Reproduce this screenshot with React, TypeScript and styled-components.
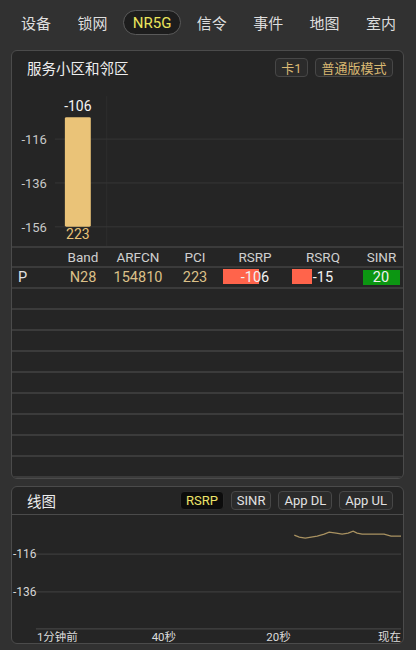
import React from 'react';
import styled, { createGlobalStyle } from 'styled-components';

const GlobalStyle = createGlobalStyle`
  html, body {
    margin: 0;
    padding: 0;
    background: #313131;
    font-family: Roboto, "Noto Sans CJK SC", "Liberation Sans", sans-serif;
    color: #e6e6e6;
  }
`;

const tabs = ['设备', '锁网', 'NR5G', '信令', '事件', '地图', '室内'];

interface CellRow {
  tag: string;
  band: string;
  arfcn: string;
  pci: string;
  rsrp: number;
  rsrq: number;
  sinr: number;
}

const rows: CellRow[] = [
  { tag: 'P', band: 'N28', arfcn: '154810', pci: '223', rsrp: -106, rsrq: -15, sinr: 20 },
];

const trace: [number, number][] = [
  [283, 20], [288, 22], [294, 23], [300, 22], [306, 21], [313, 19], [318, 17], [325, 18],
  [331, 19], [337, 18], [342, 16], [346, 18], [351, 19], [360, 19], [373, 19], [380, 21], [390, 21],
];

const Page = styled.div`
  width: 416px;
  height: 650px;
  overflow: hidden;
`;

const TabBar = styled.nav`
  height: 45px;
  display: flex;
  align-items: center;
  justify-content: space-between;
  padding: 0 9px 0 10px;
`;

const Tab = styled.div<{ $active?: boolean }>`
  height: 23px;
  padding: 0 ${(p) => (p.$active ? 9 : 10)}px;
  display: flex;
  align-items: center;
  font-size: 15px;
  color: ${(p) => (p.$active ? '#ebe55c' : '#dedede')};
  border: 1px solid ${(p) => (p.$active ? '#5a5a5a' : 'transparent')};
  background: ${(p) => (p.$active ? '#1d1d1d' : 'transparent')};
  border-radius: 13px;
`;

const Panel = styled.section<{ $height: number }>`
  margin: 5px 12px 0 11px;
  height: ${(p) => p.$height}px;
  box-sizing: border-box;
  border: 1px solid #4b4b4b;
  border-radius: 6px;
  background: #252525;
  overflow: hidden;
  & + & {
    margin-top: 7px;
  }
`;

const PanelHeader = styled.header<{ $height: number; $lift?: number; $divider?: boolean }>`
  height: ${(p) => p.$height}px;
  box-sizing: border-box;
  display: flex;
  align-items: center;
  padding: 0 10px ${(p) => p.$lift || 0}px 15px;
  border-bottom: ${(p) => (p.$divider ? '1px solid #4b4b4b' : 'none')};
`;

const Title = styled.h2`
  margin: 0;
  flex: 1;
  font-size: 14.5px;
  font-weight: 400;
  color: #eeeeee;
`;

const Chips = styled.div<{ $gap: number }>`
  display: flex;
  gap: ${(p) => p.$gap}px;
`;

const Chip = styled.span<{ $active?: boolean; $tone?: 'gold' | 'plain' }>`
  height: 17px;
  padding: 0 ${(p) => (p.$tone === 'gold' ? 5.5 : 5)}px;
  display: flex;
  align-items: center;
  font-size: 13px;
  border-radius: 4px;
  border: 1px solid ${(p) => (p.$active ? '#2a2a2a' : '#474747')};
  background: ${(p) => (p.$active ? '#0c0c0c' : '#2b2b2b')};
  color: ${(p) => (p.$active ? '#ece46a' : p.$tone === 'gold' ? '#d9b872' : '#e2e2e2')};
`;

const Chart = styled.svg<{ $height: number }>`
  display: block;
  width: 100%;
  height: ${(p) => p.$height}px;
  font-family: Roboto, "Noto Sans CJK SC", sans-serif;
`;

const Table = styled.div`
  border-top: 2px solid #3b3b3b;
`;

const Row = styled.div<{ $head?: boolean }>`
  display: grid;
  grid-template-columns: 44px 54px 56px 58px 62px 74px 1fr;
  height: ${(p) => (p.$head ? 18 : 19)}px;
  align-items: center;
  border-bottom: 2px solid #3b3b3b;
  font-size: ${(p) => (p.$head ? 13.5 : 14.5)}px;
  color: ${(p) => (p.$head ? '#cfcfcf' : '#dcc088')};
`;

const Cell = styled.div<{ $align?: 'left' | 'center'; $color?: string }>`
  position: relative;
  height: 100%;
  display: flex;
  align-items: center;
  justify-content: ${(p) => (p.$align === 'left' ? 'flex-start' : 'center')};
  padding-left: ${(p) => (p.$align === 'left' ? '6px' : '0')};
  color: ${(p) => p.$color || 'inherit'};
`;

const Level = styled.span<{ $left: number }>`
  position: absolute;
  top: 1px;
  bottom: 3px;
  left: ${(p) => p.$left}px;
  background: #ff644b;
`;

const Value = styled.span`
  position: relative;
  color: #f2f2f2;
`;

const Good = styled.span`
  width: 37px;
  height: 15px;
  margin-left: -1px;
  display: flex;
  align-items: center;
  justify-content: center;
  background: #0c9612;
  color: #f2f2f2;
`;

function App() {
  const barWidth = (v: number, full: number) => Math.round(((v + 140) / 40) * full);

  return (
    <Page>
      <GlobalStyle />
      <TabBar>
        {tabs.map((t) => (
          <Tab key={t} $active={t === 'NR5G'}>{t}</Tab>
        ))}
      </TabBar>

      <Panel $height={429}>
        <PanelHeader $height={37} $lift={5}>
          <Title>服务小区和邻区</Title>
          <Chips $gap={7}>
            <Chip $tone="gold">卡1</Chip>
            <Chip $tone="gold">普通版模式</Chip>
          </Chips>
        </PanelHeader>

        <Chart $height={158} viewBox="0 0 392 158">
          <line x1="95" y1="8" x2="95" y2="158" stroke="#2e2e2e" strokeWidth="1" />
          {[51, 95, 139].map((y) => (
            <line key={y} x1="43" y1={y} x2="392" y2={y} stroke="#363636" strokeWidth="1" />
          ))}
          {[['-116', 51], ['-136', 95], ['-156', 139]].map(([t, y]) => (
            <text key={t} x="35" y={Number(y) + 5} fill="#c8c8c8" fontSize="13" textAnchor="end">{t}</text>
          ))}
          <rect x="53" y="29" width="26" height="110" rx="1.5" fill="#eac378" />
          <text x="66" y="23" fill="#f4f4f4" fontSize="14" textAnchor="middle">-106</text>
          <text x="66" y="151" fill="#eac378" fontSize="14" textAnchor="middle">223</text>
        </Chart>

        <Table>
          <Row $head>
            <Cell />
            <Cell>Band</Cell>
            <Cell>ARFCN</Cell>
            <Cell>PCI</Cell>
            <Cell>RSRP</Cell>
            <Cell>RSRQ</Cell>
            <Cell>SINR</Cell>
          </Row>
          {rows.map((r) => (
            <Row key={r.tag}>
              <Cell $align="left" $color="#e2e2e2">{r.tag}</Cell>
              <Cell>{r.band}</Cell>
              <Cell>{r.arfcn}</Cell>
              <Cell>{r.pci}</Cell>
              <Cell>
                <Level $left={-1} style={{ width: barWidth(r.rsrp, 42) }} />
                <Value>{r.rsrp}</Value>
              </Cell>
              <Cell>
                <Level $left={6} style={{ width: Math.round((r.rsrq + 20) * 4) }} />
                <Value>{r.rsrq}</Value>
              </Cell>
              <Cell>
                <Good>{r.sinr}</Good>
              </Cell>
            </Row>
          ))}
          {Array.from({ length: 9 }).map((_, i) => (
            <Row key={i} />
          ))}
        </Table>
      </Panel>

      <Panel $height={158}>
        <PanelHeader $height={28} $lift={1} $divider>
          <Title>线图</Title>
          <Chips $gap={7}>
            <Chip $active>RSRP</Chip>
            <Chip>SINR</Chip>
            <Chip>App DL</Chip>
            <Chip>App UL</Chip>
          </Chips>
        </PanelHeader>

        <Chart $height={129} viewBox="0 0 392 129">
          {[39, 77, 114].map((y) => (
            <line key={y} x1="24" y1={y} x2="390" y2={y} stroke={y === 114 ? '#444' : '#3c3c3c'} strokeWidth="1.2" />
          ))}
          <text x="1" y="43" fill="#d6d6d6" fontSize="12">-116</text>
          <text x="1" y="81" fill="#d6d6d6" fontSize="12">-136</text>
          <text x="25" y="126" fill="#dcdcdc" fontSize="11.5">1分钟前</text>
          <text x="140" y="126" fill="#dcdcdc" fontSize="11.5">40秒</text>
          <text x="255" y="126" fill="#dcdcdc" fontSize="11.5">20秒</text>
          <text x="390" y="126" fill="#dcdcdc" fontSize="11.5" textAnchor="end">现在</text>
          <polyline
            points={trace.map(([x, y]) => `${x},${y}`).join(' ')}
            fill="none"
            stroke="#a99261"
            strokeWidth="1.2"
          />
        </Chart>
      </Panel>
    </Page>
  );
}

export default App;
